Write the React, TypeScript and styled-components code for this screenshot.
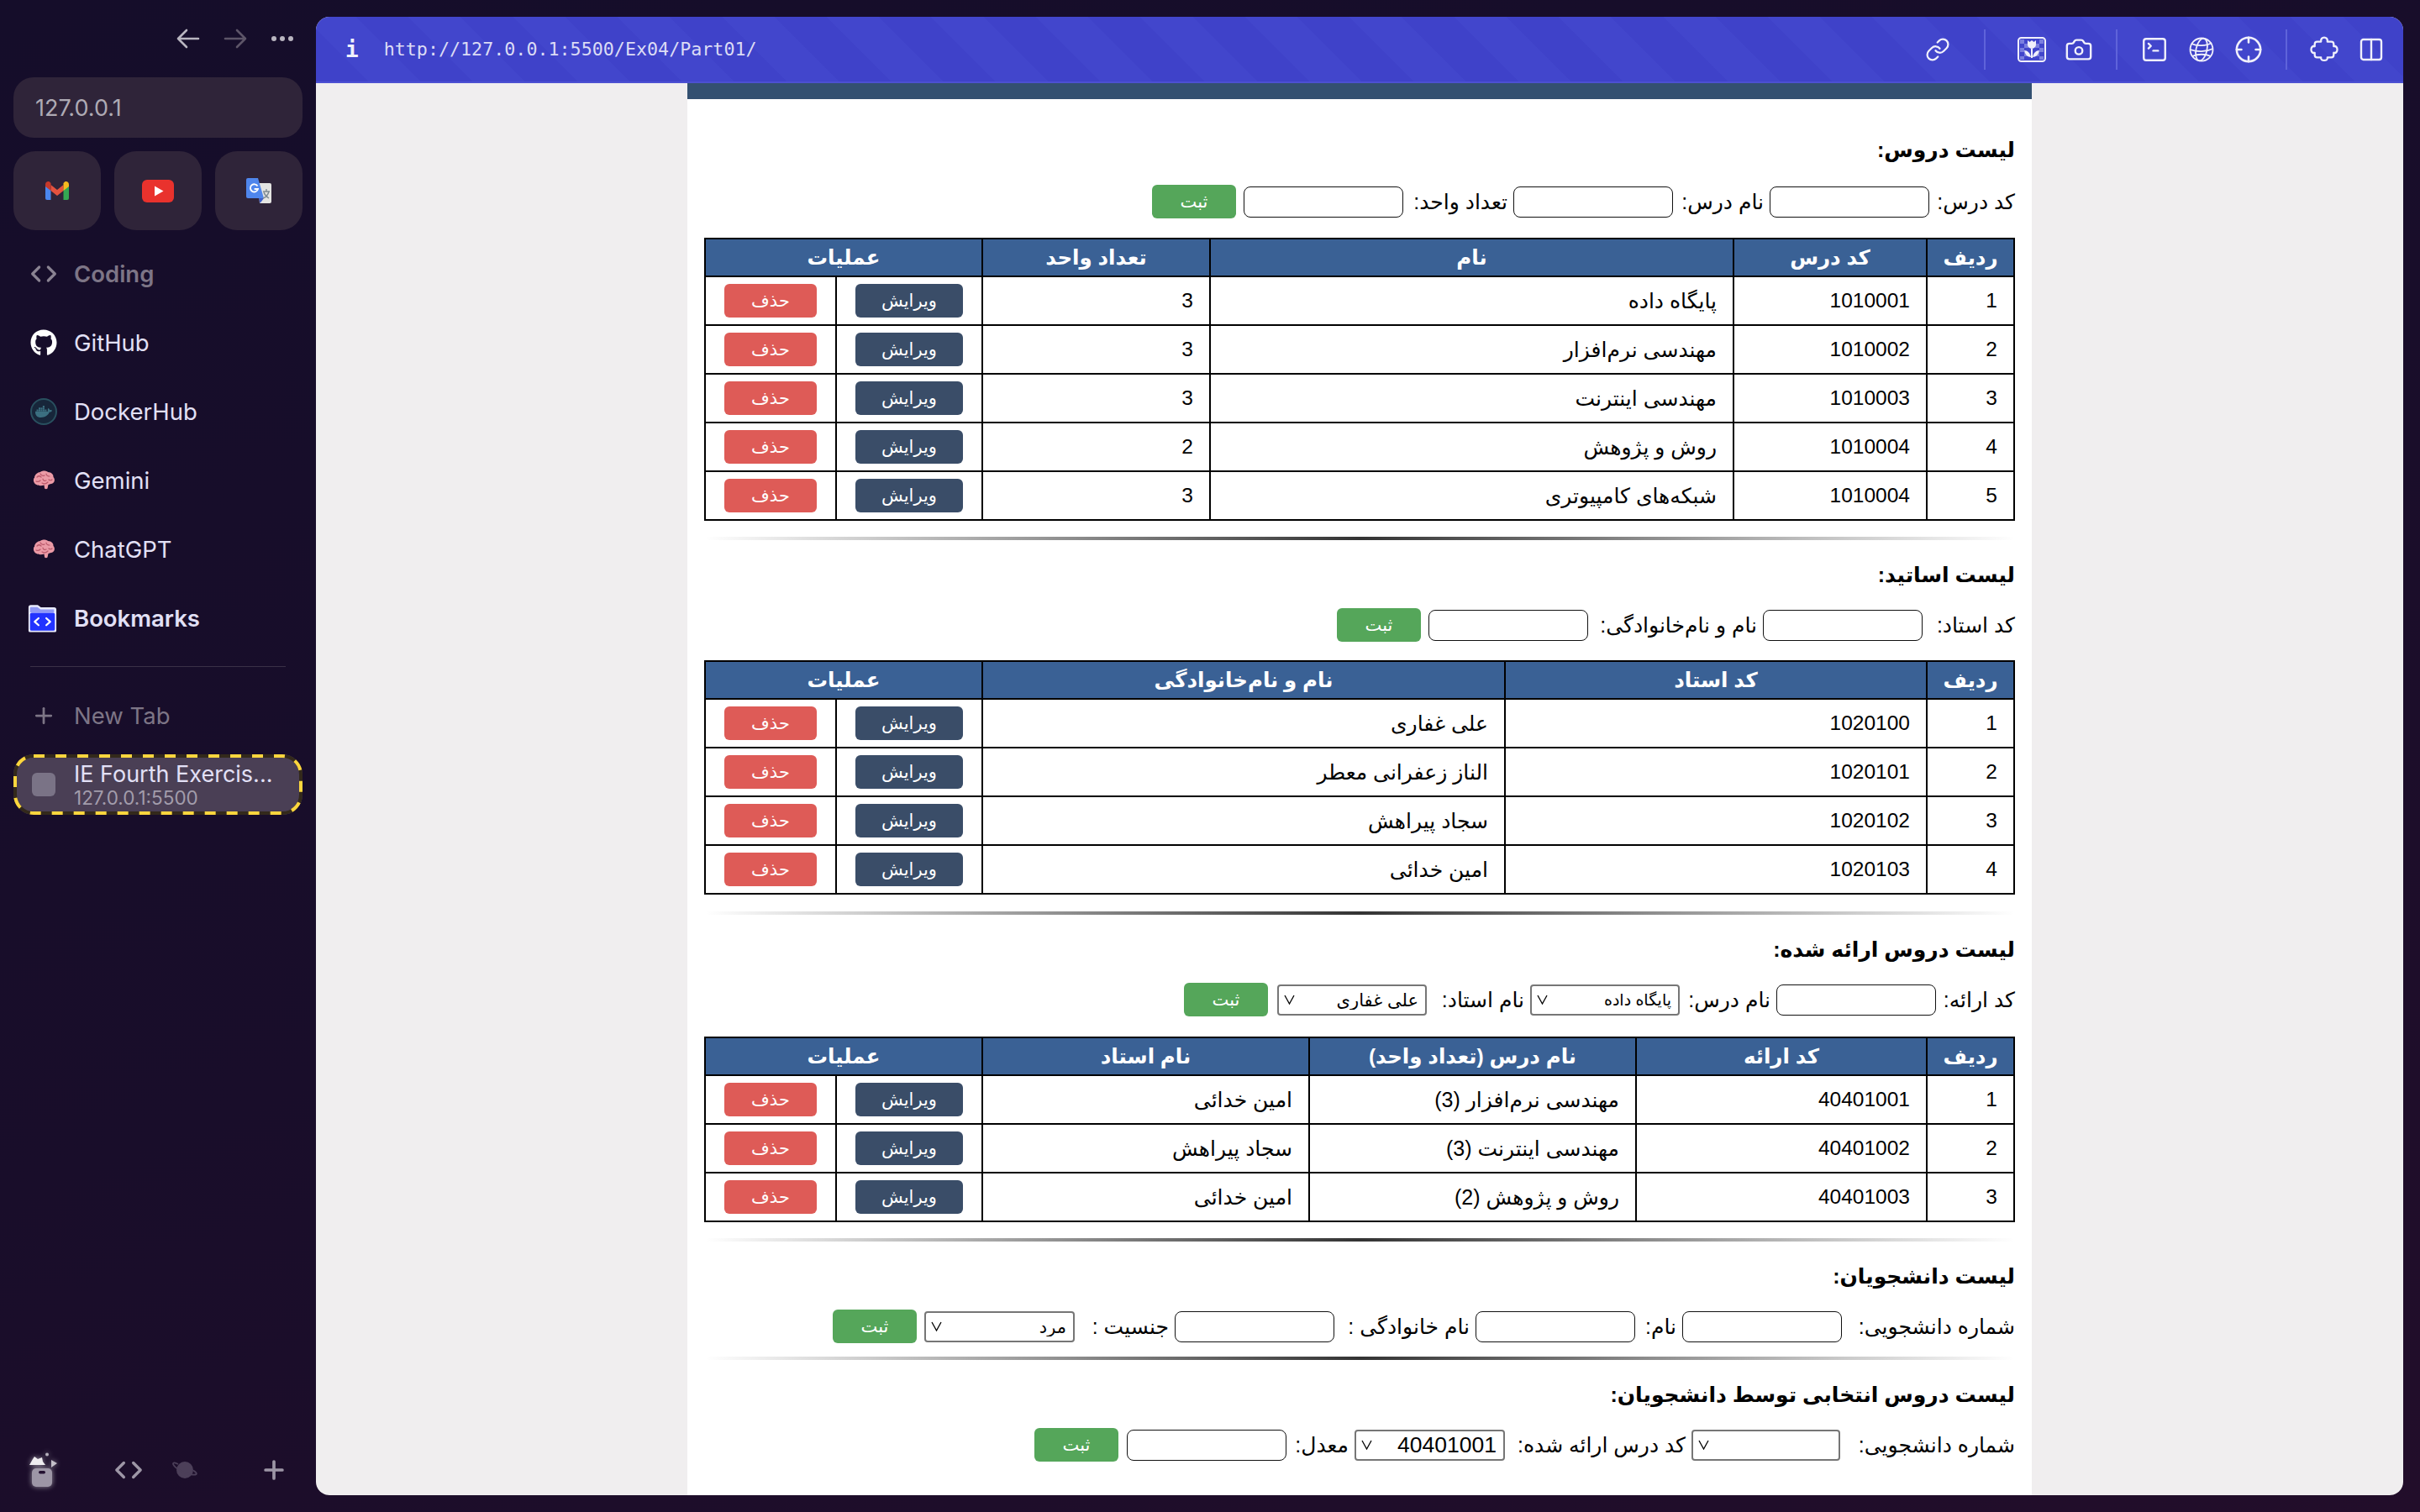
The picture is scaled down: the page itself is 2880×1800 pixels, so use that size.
import React from 'react';
import styled, { createGlobalStyle } from 'styled-components';
import { Camera, Code, Columns2, Crosshair, Link, Plus, SquareTerminal } from 'lucide-react';
import { FaGithub, FaDocker } from 'react-icons/fa';

const GlobalStyle = createGlobalStyle`
    html, body {
        margin: 0;
        padding: 0;
        width: 2880px;
        height: 1800px;
        overflow: hidden;
        background: #1a0d2a;
    }
    * { box-sizing: border-box; }
`;

const FA_FONT = `'Liberation Sans', 'DejaVu Sans', sans-serif`;

/* browser chrome */
const Shell = styled.div`
    display: flex;
    width: 2880px;
    height: 1800px;
    background: linear-gradient(160deg, #150d2a 0%, #190d2a 50%, #220d2a 100%);
    font-family: Inter, sans-serif;
`;
const Sidebar = styled.aside`
    width: 376px;
    height: 1800px;
    padding: 0 16px;
    display: flex;
    flex-direction: column;
    flex-shrink: 0;
`;
const NavRow = styled.div`
    height: 92px;
    display: flex;
    align-items: center;
    justify-content: flex-end;
    gap: 28px;
    padding-right: 10px;
    color: #c9c5d0;
`;
const NavButton = styled.span<{ $dim?: boolean }>`
    display: flex;
    width: 28px;
    justify-content: center;
    color: ${(p) => (p.$dim ? '#5d5568' : '#b9b5c0')};
`;
const SearchPill = styled.div`
    height: 72px;
    border-radius: 24px;
    background: #2f2439;
    color: #aeaab4;
    font-size: 27px;
    line-height: 74px;
    padding-left: 26px;
`;
const Tiles = styled.div`
    display: grid;
    grid-template-columns: repeat(3, 104px);
    gap: 16px;
    margin-top: 16px;
`;
const Tile = styled.div`
    height: 94px;
    border-radius: 26px;
    background: #2f2439;
    display: flex;
    align-items: center;
    justify-content: center;
`;
const Item = styled.div<{ $muted?: boolean; $bold?: boolean }>`
    height: 82px;
    display: flex;
    align-items: center;
    gap: 20px;
    padding-left: 20px;
    font-size: 27.500px;
    font-weight: ${(p) => (p.$bold ? 600 : 400)};
    color: ${(p) => (p.$muted ? '#7d7586' : '#e2e0f6')};
`;
const ItemList = styled.div`
    margin-top: 11px;
`;
const ItemIcon = styled.span`
    width: 32px;
    height: 32px;
    display: flex;
    align-items: center;
    justify-content: center;
    flex-shrink: 0;
`;
const SideDivider = styled.div`
    height: 1px;
    margin: 16px 20px 17px;
    background: #3a3046;
`;
const ActiveTab = styled.div`
    position: relative;
    height: 72px;
    margin-top: 5px;
    border-radius: 24px;
    background: #4a3f55;
    display: flex;
    align-items: center;
    gap: 22px;
    padding-left: 22px;
`;
const TabOutline = styled.svg`
    position: absolute;
    left: 0;
    top: 0;
    width: 344px;
    height: 72px;
`;
const TabSquare = styled.span`
    width: 28px;
    height: 28px;
    border-radius: 6px;
    background: #7a7386;
    flex-shrink: 0;
`;
const TabText = styled.div`
    display: flex;
    flex-direction: column;
`;
const TabTitle = styled.span`
    color: #e2e0f6;
    font-size: 27px;
    line-height: 31px;
`;
const TabUrl = styled.span`
    color: #a29cab;
    font-size: 22.500px;
    line-height: 25px;
`;
const BottomBar = styled.div`
    margin-top: auto;
    height: 100px;
    display: flex;
    align-items: center;
    padding-left: 18px;
`;
const BottomSlot = styled.span<{ $left: number }>`
    display: flex;
    margin-left: ${(p) => p.$left}px;
    color: #9d96a6;
`;

const Window = styled.main`
    flex: 1;
    margin: 20px 20px 20px 0;
    border-radius: 16px;
    overflow: hidden;
    display: flex;
    flex-direction: column;
    background: #f0eeef;
`;
const TopBar = styled.header`
    height: 79px;
    flex-shrink: 0;
    border-bottom: 2px solid #4c50d2;
    background: repeating-linear-gradient(45deg, #3f42c9 0 44px, #4246cc 44px 88px);
    display: flex;
    align-items: center;
    padding: 0 10px 0 35px;
    color: #f0f0fb;
`;
const InfoGlyph = styled.span`
    font-family: 'DejaVu Sans Mono', monospace;
    font-weight: 700;
    font-size: 26px;
`;
const Url = styled.span`
    margin-left: 30px;
    font-family: 'DejaVu Sans Mono', monospace;
    font-size: 21.700px;
    color: #dcdcf5;
`;
const Tools = styled.div`
    margin-left: auto;
    display: flex;
    align-items: center;
`;
const ToolIcon = styled.span`
    width: 56px;
    display: flex;
    justify-content: center;
`;
const ToolSep = styled.span<{ $m: number }>`
    width: 2px;
    height: 48px;
    background: #5f63da;
    margin: 0 ${(p) => p.$m}px;
`;

/* page */
const Page = styled.div`
    width: 1600px;
    margin: 0 auto;
    flex: 1;
    background: #ffffff;
    direction: rtl;
    font-family: ${FA_FONT};
    color: #000000;
`;
const Strip = styled.div`
    height: 19px;
    background: #335071;
`;
const PageBody = styled.div`
    padding: 40px 20px 0 21px;
`;
const SectionTitle = styled.h2<{ $mb?: number }>`
    margin: 0 0 ${(p) => p.$mb ?? 20}px;
    height: 40px;
    line-height: 40px;
    font-size: 25px;
    font-weight: 700;
`;
const FormRow = styled.div<{ $mb?: number }>`
    display: flex;
    align-items: center;
    height: 40px;
    margin-bottom: ${(p) => p.$mb ?? 23}px;
`;
const Label = styled.label<{ $w: number }>`
    width: ${(p) => p.$w}px;
    font-size: 25px;
    white-space: nowrap;
    flex-shrink: 0;
    &:not(:first-child) {
        padding-right: 7px;
    }
`;
const TextInput = styled.input`
    width: 190px;
    height: 37px;
    border: 1px solid #111111;
    border-radius: 8px;
    background: #ffffff;
    flex-shrink: 0;
`;
const SelectBox = styled.span<{ $w: number }>`
    position: relative;
    display: inline-flex;
    width: ${(p) => p.$w}px;
    flex-shrink: 0;
`;
const Select = styled.select<{ $size: number }>`
    appearance: none;
    width: 100%;
    height: 37px;
    padding: 0 8px;
    border: 2px solid #767676;
    border-radius: 4px;
    background: #ffffff;
    font-family: ${FA_FONT};
    font-size: ${(p) => p.$size}px;
    color: #000000;
`;
const Chevron = styled.svg`
    position: absolute;
    left: 8px;
    top: 12px;
    width: 13px;
    height: 12px;
    pointer-events: none;
`;
const SubmitButton = styled.button<{ $gap: number }>`
    width: 100px;
    height: 40px;
    margin-right: ${(p) => p.$gap}px;
    border: 0;
    border-radius: 6px;
    background: #55a65a;
    color: #ffffff;
    font-family: ${FA_FONT};
    font-size: 21px;
    flex-shrink: 0;
`;
const Table = styled.table`
    width: 1558px;
    border-collapse: collapse;
    table-layout: fixed;
`;
const Col = styled.col<{ $w: number }>`
    width: ${(p) => p.$w}px;
`;
const Th = styled.th`
    height: 45px;
    padding: 0;
    border: 2px solid #000000;
    background: #3a6195;
    color: #ffffff;
    font-size: 24.500px;
    font-weight: 700;
    text-align: center;
`;
const Td = styled.td<{ $num?: boolean }>`
    height: 58px;
    padding: 0 19px;
    border: 2px solid #000000;
    font-size: ${(p) => (p.$num ? 24.5 : 25)}px;
    text-align: right;
`;
const ActionCell = styled.td`
    height: 58px;
    padding: 0;
    border: 2px solid #000000;
    text-align: center;
`;
const RowButton = styled.button<{ $kind: 'edit' | 'remove' }>`
    display: inline-block;
    vertical-align: middle;
    width: ${(p) => (p.$kind === 'edit' ? 128 : 110)}px;
    height: 40px;
    border: 0;
    border-radius: 6px;
    padding: 0;
    background: ${(p) => (p.$kind === 'edit' ? '#3a4d68' : '#de5b57')};
    color: #ffffff;
    font-family: ${FA_FONT};
    font-size: 21px;
`;
const Rule = styled.hr<{ $top?: number }>`
    height: 4px;
    margin: ${(p) => p.$top ?? 19}px 0 21px;
    border: 0;
    background: linear-gradient(to right, transparent, #333333, transparent);
`;

/* small drawings */
const ArrowIcon = ({ flip }: { flip?: boolean }) => (
    <svg width="28" height="24" viewBox="0 0 28 24" fill="none" stroke="currentColor" strokeWidth="2.6" strokeLinecap="round" strokeLinejoin="round" style={flip ? { transform: 'scaleX(-1)' } : undefined}>
        <path d="M26 12H2M12 2 2 12l10 10" />
    </svg>
);
const DotsIcon = () => (
    <svg width="28" height="8" viewBox="0 0 28 8" fill="currentColor">
        <circle cx="4" cy="4" r="3" />
        <circle cx="14" cy="4" r="3" />
        <circle cx="24" cy="4" r="3" />
    </svg>
);
const GmailIcon = () => (
    <svg width="28" height="22" viewBox="0 0 28 22">
        <path d="M0 3.500V20a2 2 0 0 0 2 2h4.500V9z" fill="#4a86ee" />
        <path d="M28 3.500V20a2 2 0 0 1-2 2h-4.500V9z" fill="#34a853" />
        <path d="M6.500 4 14 10l7.500-6v7L14 17l-7.500-6z" fill="#e4523f" />
        <path d="M0 3.500C0 .8 3-.8 5 .6L6.500 2v9L0 6z" fill="#c5392b" />
        <path d="M28 3.500C28 .8 25-.8 23 .6L21.500 2v9L28 6z" fill="#f5bb1e" />
    </svg>
);
const YoutubeIcon = () => (
    <svg width="38" height="27" viewBox="0 0 38 27">
        <rect width="38" height="27" rx="6" fill="#e9322d" />
        <path d="M15 7.500v12l10.500-6z" fill="#ffffff" />
    </svg>
);
const TranslateIcon = () => (
    <svg width="30" height="30" viewBox="0 0 30 30">
        <path d="M14 6h14a2 2 0 0 1 2 2v20a2 2 0 0 1-2 2H16z" fill="#e4e4e2" />
        <path d="M2 0h12l7 24H2a2 2 0 0 1-2-2V2a2 2 0 0 1 2-2z" fill="#4f86ec" />
        <path d="M15 24h6l-4.500 6z" fill="#3f5fc7" />
        <path d="M20 16h8M24 13v3M27 16c-1 4-4 7-7 8M21 17c1 3 3 5 6 7" stroke="#7d8a92" strokeWidth="1.4" fill="none" />
        <path d="M13.500 9.500A4.600 4.600 0 1 0 14 13H9.600" stroke="#ffffff" strokeWidth="1.8" fill="none" />
    </svg>
);
const DockerBadge = styled.span`
    width: 32px;
    height: 32px;
    border-radius: 50%;
    border: 2px solid #29505f;
    background: #17263a;
    display: flex;
    align-items: center;
    justify-content: center;
    color: #3b6f80;
`;
const BrainIcon = () => (
    <svg width="28" height="24" viewBox="0 0 28 24">
        <path d="M3 9c0-4 4-7 7-7 2-2 7-2 9 0 4 0 7 3 6.500 6 2 2 2 6-1 7.500-2 .5-4 1-5 1.500l-1 4.500c-1 1-3 1-3.500-.5l-.5-3.500c-3 1-7 1-9-.5-3-1-4.500-5-3-8z" fill="#eb9aa6" />
        <path d="M6 8c2-2 4-1 5 0M10 4c1 2 3 3 5 2M17 4c0 2 2 3 4 3M5 13c2 1 4 0 5-1M13 10c0 2 2 3 4 2M20 11c1 1 3 1 4 0M12 15c2 1 5 1 7-1" stroke="#b9586a" strokeWidth="1.2" fill="none" strokeLinecap="round" />
    </svg>
);
const FolderIcon = () => (
    <svg width="38" height="38" viewBox="0 0 38 38" style={{ marginLeft: -3 }}>
        <path d="M1 5a3 3 0 0 1 3-3h9l4 3h17a3 3 0 0 1 3 3v27a2 2 0 0 1-2 2H3a2 2 0 0 1-2-2z" fill="#e9ebff" />
        <path d="M3 6a1.500 1.500 0 0 1 1.500-1.500h8l4 3H34v4H3z" fill="#8f98f5" />
        <rect x="3" y="12" width="32" height="23" rx="2" fill="#2233ff" />
        <path d="M14 19l-5 4.500 5 4.500M24 19l5 4.500-5 4.500" stroke="#ffffff" strokeWidth="2.4" fill="none" strokeLinecap="round" strokeLinejoin="round" />
    </svg>
);
const BoxIcon = () => (
    <svg width="36" height="42" viewBox="0 0 36 42" style={{ filter: 'drop-shadow(0 0 3px rgba(255,255,255,.55))' }}>
        <rect x="4" y="19" width="24" height="22" rx="5" fill="#9d96a6" />
        <rect x="12" y="22" width="8" height="3.500" rx="1.700" fill="#231030" />
        <path d="M1 15 5 8 7 5l4 3 5-2 1 5 3 4z" fill="#eeecef" />
        <path d="M27 9l7 4-7 5z" fill="#c4c0c9" />
        <circle cx="22" cy="2.500" r="2" fill="#b5b0bb" />
    </svg>
);
const PlanetIcon = () => (
    <svg width="30" height="24" viewBox="0 0 30 24" fill="none">
        <circle cx="15" cy="12" r="10" fill="#4c3f59" />
        <path d="M7 5C3 3 1 3 1 4.500c0 2 5 7 12 10 7 3 14 4 15.500 2.500 1-1-1-3-3.500-4.500" stroke="#4c3f59" strokeWidth="1.800" />
    </svg>
);
const GalleryIcon = () => (
    <svg width="34" height="30" viewBox="0 0 34 30" fill="none">
        <rect x="1" y="1" width="32" height="28" rx="3.500" stroke="#f0f0fb" strokeWidth="2" />
        <path d="M3 3h5v5H3zM13 8h-5v5h5zM3 13h5v5H3zM8 18h5v5H8zM3 23h5v4H3zM26 3h5v5h-5zM21 8h5v5h-5zM26 13h5v5h-5zM21 18h5v5h-5zM26 23h5v4h-5z" fill="#7b7fdf" />
        <path d="M12 4l2.500 2L17 4l2.500 2L22 4v5a5 5 0 0 1-10 0zM16 14h2v11h-2z" fill="#f0f0fb" />
        <path d="M8 16c4 0 7 3 8 8-4 0-7-3-8-8zM26 16c-4 0-7 3-8 8 4 0 7-3 8-8z" fill="#f0f0fb" />
    </svg>
);
const GlobeIcon = () => (
    <svg width="30" height="30" viewBox="0 0 30 30" fill="none" stroke="#f0f0fb" strokeWidth="1.800">
        <circle cx="15" cy="15" r="13.500" />
        <ellipse cx="15" cy="15" rx="6.500" ry="13.500" transform="rotate(12 15 15)" />
        <path d="M3 8c6 3 18 3 24-1M1.500 15c8 3 19 3 27-1M4 23c6-3 16-3 22 0" />
    </svg>
);
const PuzzleIcon = () => (
    <svg width="38" height="32" viewBox="0 0 40 34" fill="none" stroke="#f0f0fb" strokeWidth="2.400" strokeLinejoin="round">
        <path d="M11 7h5c-1.500-7 9.500-7 8 0h5c2 0 3 1 3 3v3c6-2 6 10 0 8v3c0 2-1 3-3 3h-5c1.500 5-9.500 5-8 0h-5c-2 0-3-1-3-3v-3c-6 2-6-10 0-8v-3c0-2 1-3 3-3z" />
    </svg>
);
const ChevronDown = () => (
    <Chevron viewBox="0 0 13 12" fill="none" stroke="#000000" strokeWidth="1.300">
        <path d="M1 1l5.500 10L12 1" />
    </Chevron>
);

const Field = ({ w, size, value }: { w: number; size: number; value: string }) => (
    <SelectBox $w={w}>
        <Select $size={size} defaultValue={value}>
            <option value={value}>{value}</option>
        </Select>
        <ChevronDown />
    </SelectBox>
);

const Actions = () => (
    <>
        <ActionCell>
            <RowButton $kind="edit">ویرایش</RowButton>
        </ActionCell>
        <ActionCell>
            <RowButton $kind="remove">حذف</RowButton>
        </ActionCell>
    </>
);

interface DataTableType {
    widths: number[];
    headers: string[];
    rows: string[][];
    numeric: number[];
}

const DataTable = ({ widths, headers, rows, numeric }: DataTableType) => (
    <Table>
        <colgroup>
            {widths.map((w, index) => (
                <Col key={index} $w={w} />
            ))}
            <Col $w={174} />
            <Col $w={156} />
        </colgroup>
        <thead>
            <tr>
                {headers.map((h) => (
                    <Th key={h}>{h}</Th>
                ))}
                <Th colSpan={2}>عملیات</Th>
            </tr>
        </thead>
        <tbody>
            {rows.map((row, index) => (
                <tr key={index}>
                    <Td $num>{index + 1}</Td>
                    {row.map((cell, i) => (
                        <Td key={i} $num={numeric.includes(i)}>
                            {cell}
                        </Td>
                    ))}
                    <Actions />
                </tr>
            ))}
        </tbody>
    </Table>
);

const courses = [
    ['1010001', 'پایگاه داده', '3'],
    ['1010002', 'مهندسی نرم‌افزار', '3'],
    ['1010003', 'مهندسی اینترنت', '3'],
    ['1010004', 'روش و پژوهش', '2'],
    ['1010004', 'شبکه‌های کامپیوتری', '3'],
];
const teachers = [
    ['1020100', 'علی غفاری'],
    ['1020101', 'الناز زعفرانی معطر'],
    ['1020102', 'سجاد پیراهش'],
    ['1020103', 'امین خدائی'],
];
const offered = [
    ['40401001', 'مهندسی نرم‌افزار (3)', 'امین خدائی'],
    ['40401002', 'مهندسی اینترنت (3)', 'سجاد پیراهش'],
    ['40401003', 'روش و پژوهش (2)', 'امین خدائی'],
];

const App = () => (
    <Shell>
        <GlobalStyle />
        <Sidebar>
            <NavRow>
                <NavButton><ArrowIcon /></NavButton>
                <NavButton $dim><ArrowIcon flip /></NavButton>
                <NavButton><DotsIcon /></NavButton>
            </NavRow>
            <SearchPill>127.0.0.1</SearchPill>
            <Tiles>
                <Tile><GmailIcon /></Tile>
                <Tile><YoutubeIcon /></Tile>
                <Tile><TranslateIcon /></Tile>
            </Tiles>
            <ItemList>
                <Item $muted $bold><ItemIcon><Code size={34} strokeWidth={2.4} color="#8a8392" /></ItemIcon>Coding</Item>
                <Item><ItemIcon><FaGithub size={32} color="#ffffff" /></ItemIcon>GitHub</Item>
                <Item><ItemIcon><DockerBadge><FaDocker size={20} /></DockerBadge></ItemIcon>DockerHub</Item>
                <Item><ItemIcon><BrainIcon /></ItemIcon>Gemini</Item>
                <Item><ItemIcon><BrainIcon /></ItemIcon>ChatGPT</Item>
                <Item $bold><ItemIcon><FolderIcon /></ItemIcon>Bookmarks</Item>
            </ItemList>
            <SideDivider />
            <Item $muted><ItemIcon><Plus size={30} strokeWidth={2.2} color="#7d7586" /></ItemIcon>New Tab</Item>
            <ActiveTab>
                <TabOutline viewBox="0 0 344 72" fill="none" strokeWidth="4">
                    <rect x="2" y="2" width="340" height="68" rx="22" stroke="#33291b" />
                    <rect x="2" y="2" width="340" height="68" rx="22" stroke="#fcd63e" strokeDasharray="13 13" />
                </TabOutline>
                <TabSquare />
                <TabText>
                    <TabTitle>IE Fourth Exercis...</TabTitle>
                    <TabUrl>127.0.0.1:5500</TabUrl>
                </TabText>
            </ActiveTab>
            <BottomBar>
                <BottomSlot $left={0}><BoxIcon /></BottomSlot>
                <BottomSlot $left={66}><Code size={34} strokeWidth={2.4} /></BottomSlot>
                <BottomSlot $left={35}><PlanetIcon /></BottomSlot>
                <BottomSlot $left={74}><Plus size={34} strokeWidth={2.6} /></BottomSlot>
            </BottomBar>
        </Sidebar>
        <Window>
            <TopBar>
                <InfoGlyph>i</InfoGlyph>
                <Url>http://127.0.0.1:5500/Ex04/Part01/</Url>
                <Tools>
                    <ToolIcon><Link size={30} strokeWidth={1.8} /></ToolIcon>
                    <ToolSep $m={27} />
                    <ToolIcon><GalleryIcon /></ToolIcon>
                    <ToolIcon><Camera size={34} strokeWidth={1.7} /></ToolIcon>
                    <ToolSep $m={16} />
                    <ToolIcon><SquareTerminal size={34} strokeWidth={1.7} /></ToolIcon>
                    <ToolIcon><GlobeIcon /></ToolIcon>
                    <ToolIcon><Crosshair size={34} strokeWidth={1.8} /></ToolIcon>
                    <ToolSep $m={16} />
                    <ToolIcon><PuzzleIcon /></ToolIcon>
                    <ToolIcon><Columns2 size={32} strokeWidth={1.8} /></ToolIcon>
                </Tools>
            </TopBar>
            <Page>
                <Strip />
                <PageBody>
                    <SectionTitle $mb={22}>لیست دروس:</SectionTitle>
                    <FormRow>
                        <Label $w={102}>کد درس:</Label>
                        <TextInput />
                        <Label $w={115}>نام درس:</Label>
                        <TextInput />
                        <Label $w={131}>تعداد واحد:</Label>
                        <TextInput />
                        <SubmitButton $gap={9}>ثبت</SubmitButton>
                    </FormRow>
                    <DataTable
                        widths={[104, 230, 623, 271]}
                        headers={['ردیف', 'کد درس', 'نام', 'تعداد واحد']}
                        rows={courses}
                        numeric={[0, 2]}
                    />
                    <Rule />

                    <SectionTitle>لیست اساتید:</SectionTitle>
                    <FormRow $mb={22}>
                        <Label $w={110}>کد استاد:</Label>
                        <TextInput />
                        <Label $w={208}>نام و نام‌خانوادگی:</Label>
                        <TextInput />
                        <SubmitButton $gap={9}>ثبت</SubmitButton>
                    </FormRow>
                    <DataTable
                        widths={[104, 502, 622]}
                        headers={['ردیف', 'کد استاد', 'نام و نام‌خانوادگی']}
                        rows={teachers}
                        numeric={[0]}
                    />
                    <Rule $top={20} />

                    <SectionTitle>لیست دروس ارائه شده:</SectionTitle>
                    <FormRow $mb={24}>
                        <Label $w={94}>کد ارائه:</Label>
                        <TextInput />
                        <Label $w={115}>نام درس:</Label>
                        <Field w={178} size={19} value="پایگاه داده" />
                        <Label $w={123}>نام استاد:</Label>
                        <Field w={178} size={21} value="علی غفاری" />
                        <SubmitButton $gap={11}>ثبت</SubmitButton>
                    </FormRow>
                    <DataTable
                        widths={[104, 346, 389, 389]}
                        headers={['ردیف', 'کد ارائه', 'نام درس (تعداد واحد)', 'نام استاد']}
                        rows={offered}
                        numeric={[0]}
                    />
                    <Rule />

                    <SectionTitle>لیست دانشجویان:</SectionTitle>
                    <FormRow $mb={0}>
                        <Label $w={206}>شماره دانشجویی:</Label>
                        <TextInput />
                        <Label $w={56}>نام:</Label>
                        <TextInput />
                        <Label $w={168}>نام خانوادگی :</Label>
                        <TextInput />
                        <Label $w={119}>جنسیت :</Label>
                        <Field w={179} size={21} value="مرد" />
                        <SubmitButton $gap={9}>ثبت</SubmitButton>
                    </FormRow>
                    <Rule $top={16} />

                    <SectionTitle>لیست دروس انتخابی توسط دانشجویان:</SectionTitle>
                    <FormRow $mb={0}>
                        <Label $w={208}>شماره دانشجویی:</Label>
                        <Field w={177} size={21} value="" />
                        <Label $w={222}>کد درس ارائه شده:</Label>
                        <Field w={179} size={26.5} value="40401001" />
                        <Label $w={81}>معدل:</Label>
                        <TextInput />
                        <SubmitButton $gap={10}>ثبت</SubmitButton>
                    </FormRow>
                </PageBody>
            </Page>
        </Window>
    </Shell>
);

export default App;
